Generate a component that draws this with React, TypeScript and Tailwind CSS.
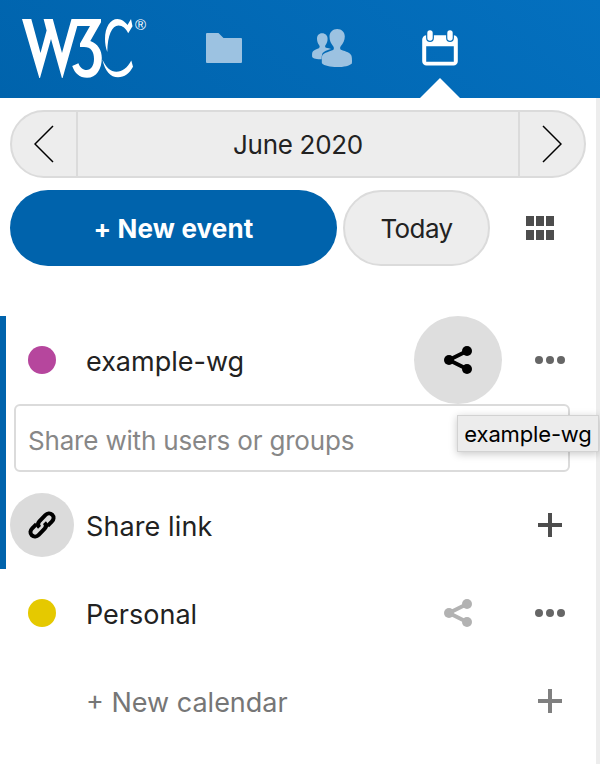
import type { ReactNode } from "react";

function W3CLogo() {
  return (
    <svg width="130" height="66" viewBox="20 15 130 66" className="ml-5 mt-[15px] shrink-0" fill="white">
      <path d="M22 19H31.3L40.5 53L46.600 30.5L43.6 19H52.8L62 53L71.5 19H101V22.3L90.3 41C98 43.5 101.8 50.5 101.8 58C101.8 69 96.5 77.8 87 77.8C79.5 77.8 74.8 73.2 72.2 66L78.4 63.2C80 67.5 83 70 86.5 70C91 70 94 65.5 94 59C94 51.5 91 47 84 47H80V43.6L90 26H77.3L62.6 78H61.9L51 39L40 78H39.3Z" />
      <path d="M131 19L132.5 26.3L128.2 33.3C126 28.5 122.5 25.5 118.5 25.5C112 25.5 107.5 35 107.3 52C105.8 48 105 43.5 105 39C105 27 110.3 19 117.5 19C121.5 19 125 21.8 127.5 25Z" />
      <path d="M102.3 59.5C106 67.5 110.8 71.8 116.3 71.8C122.5 71.8 127.5 67.5 131.3 60.5L133 66.8C129.5 73.3 124.5 77.3 118 77.3C110.5 77.3 105 71 102.3 59.5Z" />
      <text x="135" y="30" fontSize="15" fontFamily="Liberation Sans, sans-serif">®</text>
    </svg>
  );
}

function FolderIcon() {
  return (
    <svg width="36" height="30" viewBox="0 0 36 30" fill="#9cc2e1">
      <path d="M1 0H12.5L17.5 5H35a1 1 0 0 1 1 1V29a1 1 0 0 1-1 1H1a1 1 0 0 1-1-1V1a1 1 0 0 1 1-1Z" />
    </svg>
  );
}

function ContactsIcon() {
  return (
    <svg width="40" height="38" viewBox="312 29 40 38" fill="#9cc2e1">
      <path d="M322 33.3c-3.200 0-5 2.400-5 5.400 0 3 1 4.800 2.200 6.600.8 1.200.6 2.300-.4 2.900-3.600 1.300-6 2.600-6.500 4.200-.3 1.200-.3 3-.1 4.500.8 1.500 4.500 2.300 10 2.300V54c.4-1.700 3.200-3.600 9-5.100-1.500-.6-3.200-.8-5.200-1.100-1-.7-1.200-1.500-.4-2.700 1.200-1.800 2-3.500 2-6.300 0-3.100-2-5.500-5.600-5.500Z" />
      <path stroke="#056cb7" strokeWidth="0.600" paintOrder="stroke" d="M337.200 29c-4.500 0-7.700 3.200-7.700 7.500 0 4.200 1.500 7 3.500 9.500 1.200 1.500 1.100 3 .1 3.900-6 2-10.200 3.500-11 6.200-.3 1.500-.4 4-.2 7.200 2.500 2.500 8.500 3.700 15 3.700 7 0 12.700-1.200 15-3.600.2-3 .1-5.700-.4-7.600-1.200-2.800-5-4.300-10.600-6-1-1-1.100-2.300 0-3.800 2.200-2.800 3.900-5.300 3.900-9.500 0-4.300-3-7.500-7.600-7.500Z" />
    </svg>
  );
}

function CalendarIcon() {
  return (
    <svg width="36" height="36" viewBox="0 0 36 36">
      <path fill="white" fillRule="evenodd" d="M4.500 5.200H31.500a4.300 4.300 0 0 1 4.300 4.300V31.200a4.300 4.300 0 0 1-4.300 4.300H4.500A4.300 4.300 0 0 1 .2 31.200V9.500A4.300 4.300 0 0 1 4.500 5.200ZM4.200 16.300V31.700H31.800V16.300Z" />
      <rect x="4.100" y="-1" width="7.800" height="13" rx="3.900" fill="#056cb8" />
      <rect x="24.100" y="-1" width="7.800" height="13" rx="3.900" fill="#056cb8" />
      <rect x="5.300" y="0.200" width="5.400" height="10.600" rx="2.700" fill="white" />
      <rect x="25.300" y="0.200" width="5.400" height="10.600" rx="2.700" fill="white" />
    </svg>
  );
}

function Chevron({ d }: { d: string }) {
  return (
    <svg width="20" height="38" viewBox="0 0 20 38" fill="none" stroke="black" strokeWidth="1.500">
      <path d={d} />
    </svg>
  );
}

function ShareIcon({ color }: { color: string }) {
  return (
    <svg width="28" height="28" viewBox="0 0 28 28" fill={color}>
      <path d="M23 5L5 14L23 23" fill="none" stroke={color} strokeWidth="4" />
      <circle cx="5" cy="14" r="5" />
      <circle cx="23" cy="5" r="5" />
      <circle cx="23" cy="23" r="5" />
    </svg>
  );
}

function LinkIcon() {
  return (
    <svg width="28" height="28" viewBox="0 0 28 28" fill="none" stroke="black" strokeWidth="4">
      <path d="M11.500 16.300C9.600 14.300 9.700 12 11.300 10.300L17.300 4.200C19.300 2.200 22.100 1.700 24.200 3.700C26.300 5.800 25.800 8.700 23.800 10.700L19.600 14.900" />
      <path d="M16.500 11.700C18.400 13.700 18.300 16 16.700 17.700L10.700 23.800C8.700 25.800 5.900 26.300 3.800 24.300C1.700 22.200 2.200 19.300 4.200 17.300L8.400 13.100" />
    </svg>
  );
}

function MoreIcon() {
  return (
    <svg width="30" height="8" viewBox="0 0 30 8" fill="#666">
      <circle cx="4" cy="4" r="4" />
      <circle cx="15" cy="4" r="4" />
      <circle cx="26" cy="4" r="4" />
    </svg>
  );
}

function PlusIcon({ color }: { color: string }) {
  return (
    <svg width="24" height="24" viewBox="0 0 24 24" fill={color}>
      <path d="M10 0h4v10h10v4H14v10h-4V14H0v-4h10Z" />
    </svg>
  );
}

function Row({ lead, label, share, action }: { lead?: ReactNode; label: ReactNode; share?: ReactNode; action: ReactNode }) {
  return (
    <div className="flex h-[88px] items-center">
      <div className="flex w-[84px] shrink-0 justify-center">{lead}</div>
      <div className="flex-1 whitespace-nowrap pl-[2px] pt-[3px] text-[27px]">{label}</div>
      <div className="flex w-[88px] justify-center">{share}</div>
      <div className="-mr-[2px] flex w-24 justify-center">{action}</div>
    </div>
  );
}

export default function App() {
  return (
    <div className="flex h-[764px] w-[600px] flex-col overflow-hidden bg-white font-['Inter',sans-serif] text-[26px] leading-8 text-[#222]">
      <header className="flex h-[98px] shrink-0 items-start bg-[linear-gradient(40deg,#0063ac_0%,#0470bf_100%)]">
        <W3CLogo />
        <nav className="ml-5 flex h-full">
          <div className="flex w-[108px] justify-center pt-[33px]"><FolderIcon /></div>
          <div className="flex w-[108px] justify-center pt-[29px]"><ContactsIcon /></div>
          <div className="flex w-[108px] flex-col items-center justify-between pt-[30px]">
            <CalendarIcon />
            <div className="h-5 w-10 bg-white [clip-path:polygon(50%_0,100%_100%,0_100%)]" />
          </div>
        </nav>
      </header>

      <div className="flex-1 border-r-4 border-[#ededed]">
        <div className="px-[10px] pt-3">
          <div className="flex h-[68px] overflow-hidden rounded-full border-2 border-[#dbdbdb] bg-[#ededed]">
            <button className="flex w-[66px] items-center justify-center border-r-2 border-[#dbdbdb]"><Chevron d="M19 1L1 19L19 37" /></button>
            <button className="flex-1 pt-[2px]"><span className="tracking-[-0.3px]">June 2020</span></button>
            <button className="flex w-[66px] items-center justify-center border-l-2 border-[#dbdbdb]"><Chevron d="M1 1L19 19L1 37" /></button>
          </div>
          <div className="mt-3 flex h-[76px] items-center">
            <button className="h-full w-[327px] rounded-full bg-[#0063ac] pt-[2px] font-bold text-white"><span className="tracking-[0.15px]">+ New event</span></button>
            <button className="ml-[6px] h-full w-[147px] rounded-full border-2 border-[#dbdbdb] bg-[#ededed] pt-[2px]"><span className="tracking-[-0.6px]">Today</span></button>
            <button className="ml-9 grid grid-cols-3 gap-x-[2px] gap-y-1">
              {[0, 1, 2, 3, 4, 5].map((i) => (
                <span key={i} className="h-[10px] w-2 bg-[#4d4d4d]" />
              ))}
            </button>
          </div>
        </div>

        <section className="relative mt-[50px] h-[253px] border-l-[6px] border-[#0063ac]">
          <div className="-ml-[6px]">
            <Row
              lead={<span className="size-7 rounded-full bg-[#b6469d]" />}
              label={<span>example-wg</span>}
              share={<span className="flex size-[88px] items-center justify-center rounded-full bg-[#dedede]"><ShareIcon color="#000" /></span>}
              action={<MoreIcon />}
            />
            <div className="ml-[14px] flex h-[68px] w-[556px] items-center rounded-md border-2 border-[#dbdbdb] bg-white pl-3 pt-[6px] text-[#878787]">
              <span className="whitespace-nowrap tracking-[-0.18px]">Share with users or groups</span>
            </div>
            <div className="pt-[9px]">
              <Row
                lead={<span className="flex size-16 items-center justify-center rounded-full bg-[#dbdbdb]"><LinkIcon /></span>}
                label={<span className="tracking-[0.1px]">Share link</span>}
                action={<PlusIcon color="#4d4d4d" />}
              />
            </div>
          </div>
          <div className="absolute left-[451px] top-[99px] flex h-[37px] w-[142px] items-center justify-center whitespace-nowrap border border-[#d2d2d2] bg-[#ececec] pt-px text-[22px] text-black shadow-[0_2px_8px_rgba(0,0,0,0.22)]">
            <span className="tracking-[-0.15px]">example-wg</span>
          </div>
        </section>

        <Row
          lead={<span className="size-7 rounded-full bg-[#e5c900]" />}
          label={<span>Personal</span>}
          share={<ShareIcon color="#b2b2b2" />}
          action={<MoreIcon />}
        />
        <Row label={<span className="text-[#767676]">+ New calendar</span>} action={<PlusIcon color="#808080" />} />
      </div>
    </div>
  );
}
